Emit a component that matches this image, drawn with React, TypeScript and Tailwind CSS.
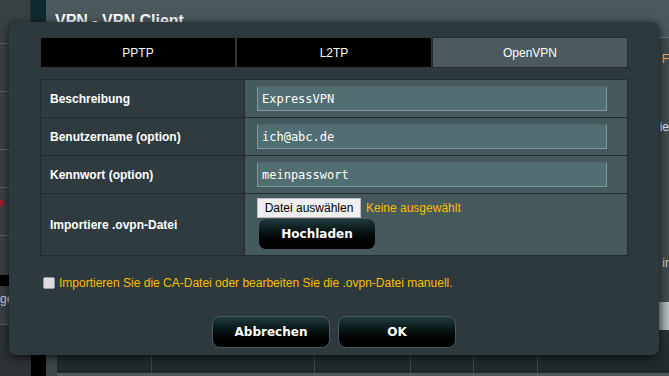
import React from "react";

const sans = "font-['Liberation_Sans',Arial,sans-serif]";
const btnFont = "font-['DejaVu_Sans',Verdana,sans-serif]";

function DarkButton({ label, className = "" }: { label: string; className?: string }) {
  return (
    <div
      className={`flex items-center justify-center rounded-[8px] border border-[#4b585c] bg-linear-to-b from-[#203a3f] via-[#06100f] to-black text-[12px] font-bold text-white ${btnFont} ${className}`}
    >
      {label}
    </div>
  );
}

function Row({ label, children, tall = false }: { label: string; children: React.ReactNode; tall?: boolean }) {
  return (
    <div className={`flex border-b border-[#222b2e] last:border-b-0 ${tall ? "h-[61px]" : "h-[38px]"}`}>
      <div className="flex w-[204px] items-center border-r border-[#222b2e] bg-[#2f3b3f] pl-[9px] text-[12px] font-bold text-white">
        {label}
      </div>
      <div className="flex flex-1 bg-[#465a5d]">{children}</div>
    </div>
  );
}

function TextInput({ value }: { value: string }) {
  return (
    <div className="ml-[12px] flex h-[25px] w-[350px] items-center self-center border border-[#85979a] border-t-2 border-t-[#56686c] bg-[#516e72] pl-[4px] font-['DejaVu_Sans_Mono',monospace] text-[12px] text-white">
      {value}
    </div>
  );
}

export default function App() {
  return (
    <div className={`relative h-[376px] w-[669px] overflow-hidden bg-[#4b585c] ${sans}`}>
      {/* background page */}
      <div className="flex h-full">
        {/* left menu strip */}
        <div className="flex w-[31px] flex-col border-r border-[#2a3033] bg-[#3a4144]">
          <div className="h-[44px] border-b border-[#5a6265]" />
          <div className="h-[48px] border-b border-[#5a6265]" />
          <div className="h-[58px] border-b border-[#5a6265]" />
          <div className="h-[38px] border-b border-[#5a6265]" />
          <div className="flex h-[48px] items-center border-b border-[#5a6265]">
            <div className="mt-[-18px] h-[6px] w-[3px] bg-[#a01c2c]" />
          </div>
          <div className="h-[39px]" />
          <div className="h-[11px] bg-black" />
          <div className="h-[39px] border-b border-[#5a6265] pl-[0px] pt-[4px] text-[12px] text-[#cfd4d6]">ge</div>
          <div className="flex-1 bg-[#2c3235]" />
        </div>
        {/* teal column */}
        <div className="flex w-[15px] flex-col">
          <div className="flex-1 bg-[#0f2a2e]" />
          <div className="h-[30px] bg-black" />
        </div>
        {/* main */}
        <div className="flex flex-1 flex-col">
          <div className="h-[40px] border-b border-[#65757a] pl-[9px] pt-[9px] text-[16px] font-bold text-white">
            VPN - VPN Client
          </div>
          <div className="flex flex-1 flex-col items-end bg-[#3f4b4f] pr-0 text-[12px]">
            <div className="mt-[12px] whitespace-nowrap text-[#cfd6d8]">
              e <span className="text-[#f2b540]">F</span>
            </div>
            <div className="mt-[50px] text-[#e8eef0]">ie</div>
            <div className="mt-[118px] text-[#c7cfd2]">ir</div>
            <div className="mt-[30px] h-[28px] w-[12px] bg-linear-to-r from-[#8a9496] to-[#b9c1c3]" />
          </div>
          <div className="flex h-[46px]">
            <div className="w-[11px] bg-[#3d4649]" />
            <div className="flex flex-1 flex-col">
              <div className="flex h-[43px] bg-linear-to-b from-[#2a3337] to-[#1f272a] text-[12px] text-[#4a5558]">
                <div className="flex w-[95px] items-end justify-center border-r border-[#3e484b] pb-[18px]">Verbindungsstatus</div>
                <div className="flex w-[163px] items-end justify-center border-r border-[#3e484b] pb-[18px]">Beschreibung</div>
                <div className="flex w-[96px] items-end justify-center border-r border-[#3e484b] pb-[18px]">VPN-Typ</div>
                <div className="flex w-[63px] items-end justify-center border-r border-[#3e484b] pb-[18px]">Bearbeiten</div>
                <div className="flex w-[64px] items-end justify-center border-r border-[#3e484b] pb-[18px]">Entfernen</div>
                <div className="flex-1" />
              </div>
              <div className="h-[3px] bg-[#4f5a5e]" />
            </div>
          </div>
        </div>
      </div>

      {/* dialog overlay */}
      <div className="absolute left-[9px] top-[22px] flex h-[333px] w-[650px] flex-col rounded-[7px] bg-[#2e393d] px-[31px] pt-[15px] shadow-[0_2px_10px_rgba(0,0,0,0.75)]">
        {/* tabs */}
        <div className="flex h-[31px] text-[12px] text-white">
          <div className="flex flex-1 items-center justify-center border border-[#333] bg-black">PPTP</div>
          <div className="flex flex-1 items-center justify-center border border-[#333] bg-black">L2TP</div>
          <div className="flex flex-1 items-center justify-center border border-[#2b2b2b] bg-[#4b5a5e]">OpenVPN</div>
        </div>

        {/* table */}
        <div className="mt-[11px] flex flex-col border border-[#222b2e]">
          <Row label="Beschreibung">
            <TextInput value="ExpressVPN" />
          </Row>
          <Row label="Benutzername (option)">
            <TextInput value="ich@abc.de" />
          </Row>
          <Row label="Kennwort (option)">
            <TextInput value="meinpasswort" />
          </Row>
          <Row label="Importiere .ovpn-Datei" tall>
            <div className="flex flex-col pl-[12px] pt-[4px]">
              <div className="flex items-center">
                <div className="flex h-[20px] w-[104px] items-center justify-center border border-[#bdbdbd] bg-[#efefef] text-[12px] text-black">
                  Datei auswählen
                </div>
                <span className="ml-[5px] text-[12px] text-[#f8bf00]">Keine ausgewählt</span>
              </div>
              <DarkButton label="Hochladen" className="ml-[1px] h-[32px] w-[118px]" />
            </div>
          </Row>
        </div>

        {/* checkbox */}
        <div className="mt-[18px] flex items-center pl-[3px]">
          <div className="h-[12px] w-[12px] rounded-[2px] border border-[#9a9a9a] bg-[#dedede]" />
          <span className="ml-[4px] text-[12px] text-[#f8bf00]">
            Importieren Sie die CA-Datei oder bearbeiten Sie die .ovpn-Datei manuell.
          </span>
        </div>

        {/* buttons */}
        <div className="mt-[24px] flex justify-center gap-[8px]">
          <DarkButton label="Abbrechen" className="h-[32px] w-[118px]" />
          <DarkButton label="OK" className="h-[32px] w-[118px]" />
        </div>
      </div>
    </div>
  );
}
